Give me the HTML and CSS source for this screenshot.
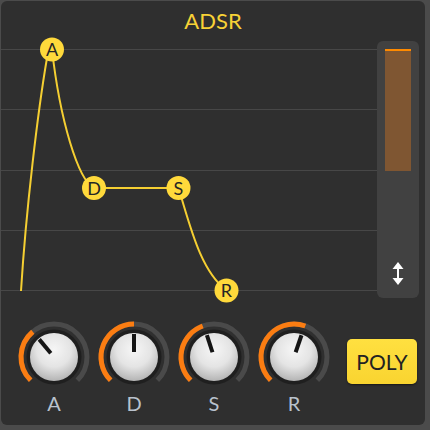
FILE: index.html
```html
<!DOCTYPE html>
<html lang="en">
    <head>
        <meta charset="UTF-8" />
        <meta name="viewport" content="width=device-width, initial-scale=1.0"/>
        <title>ADSR</title>
        <link rel="stylesheet" href="styles.css">
    </head>
    <body>
        <div class="panel">
            <div class="title">ADSR</div>

            <div class="main">
                <svg class="graph" width="376" height="260" viewBox="1 41 376 260">
                    <g class="grid">
                        <line x1="1" y1="49.5" x2="377" y2="49.5"/>
                        <line x1="1" y1="109.5" x2="377" y2="109.5"/>
                        <line x1="1" y1="170.5" x2="377" y2="170.5"/>
                        <line x1="1" y1="230.5" x2="377" y2="230.5"/>
                        <line x1="1" y1="290.5" x2="377" y2="290.5"/>
                    </g>
                    <path class="curve" d="M21,291 C26,210 38,110 47,58 L52,49.5 C60,120 78,180 94,188 L178.5,188 C190,225 200,270 226.5,290.5"/>
                    <g class="node">
                        <circle cx="52" cy="49.5" r="12"/>
                        <text x="52" y="56">A</text>
                    </g>
                    <g class="node">
                        <circle cx="94" cy="188" r="12"/>
                        <text x="94" y="194.5">D</text>
                    </g>
                    <g class="node">
                        <circle cx="178.5" cy="188" r="12"/>
                        <text x="178.5" y="194.5">S</text>
                    </g>
                    <g class="node">
                        <circle cx="226.5" cy="290.5" r="12"/>
                        <text x="226.5" y="297">R</text>
                    </g>
                </svg>

                <div class="slider">
                    <div class="slider-fill"></div>
                    <svg class="slider-icon" width="12" height="23" viewBox="0 0 12 23">
                        <polygon points="6,0 11.5,7 0.5,7"/>
                        <rect x="5" y="6" width="2" height="11"/>
                        <polygon points="0.5,16 11.5,16 6,23"/>
                    </svg>
                </div>
            </div>

            <div class="controls">
                <div class="knob">
                    <svg width="80" height="76" viewBox="0 0 80 76">
                        <defs>
                            <radialGradient id="cap" cx="50%" cy="35%" r="65%">
                                <stop offset="0" stop-color="#f6f6f6"/>
                                <stop offset="0.55" stop-color="#e4e4e4"/>
                                <stop offset="1" stop-color="#b4b4b4"/>
                            </radialGradient>
                        </defs>
                        <path class="track" d="M16.67,63.33 A33,33 0 1,1 63.33,63.33"/>
                        <path class="value" d="M16.67,63.33 A33,33 0 0,1 18.79,14.72"/>
                        <circle class="ring" cx="40" cy="40" r="27.5"/>
                        <circle class="cap" cx="40" cy="40" r="24"/>
                        <line class="pointer" x1="40" y1="35" x2="40" y2="17" transform="rotate(-40 40 40)"/>
                    </svg>
                    <span class="knob-label">A</span>
                </div>
                <div class="knob">
                    <svg width="80" height="76" viewBox="0 0 80 76">
                        <path class="track" d="M16.67,63.33 A33,33 0 1,1 63.33,63.33"/>
                        <path class="value" d="M16.67,63.33 A33,33 0 0,1 40,7"/>
                        <circle class="ring" cx="40" cy="40" r="27.5"/>
                        <circle class="cap" cx="40" cy="40" r="24"/>
                        <line class="pointer" x1="40" y1="35" x2="40" y2="17"/>
                    </svg>
                    <span class="knob-label">D</span>
                </div>
                <div class="knob">
                    <svg width="80" height="76" viewBox="0 0 80 76">
                        <path class="track" d="M16.67,63.33 A33,33 0 1,1 63.33,63.33"/>
                        <path class="value" d="M16.67,63.33 A33,33 0 0,1 28.71,8.99"/>
                        <circle class="ring" cx="40" cy="40" r="27.5"/>
                        <circle class="cap" cx="40" cy="40" r="24"/>
                        <line class="pointer" x1="40" y1="35" x2="40" y2="17" transform="rotate(-18 40 40)"/>
                    </svg>
                    <span class="knob-label">S</span>
                </div>
                <div class="knob">
                    <svg width="80" height="76" viewBox="0 0 80 76">
                        <path class="track" d="M16.67,63.33 A33,33 0 1,1 63.33,63.33"/>
                        <path class="value" d="M16.67,63.33 A33,33 0 0,1 51.29,8.99"/>
                        <circle class="ring" cx="40" cy="40" r="27.5"/>
                        <circle class="cap" cx="40" cy="40" r="24"/>
                        <line class="pointer" x1="40" y1="35" x2="40" y2="17" transform="rotate(19 40 40)"/>
                    </svg>
                    <span class="knob-label">R</span>
                </div>

                <button class="poly">POLY</button>
            </div>
        </div>
    </body>
</html>
```

FILE: styles.css
```css
* {
    margin: 0;
    padding: 0;
    box-sizing: border-box;
}

body {
    background: #4b4b4b;
    font-family: 'Lato', 'Open Sans', sans-serif;
}

.panel {
    width: 424px;
    height: 424px;
    margin: 1px 0 0 1px;
    background-color: #2f2f2f;
    border-radius: 6px;
}

.title {
    height: 40px;
    line-height: 40px;
    text-align: center;
    font-size: 22px;
    color: #f8d236;
}

.main {
    display: flex;
    height: 260px;
}

.graph {
    flex: none;
    overflow: visible;
}

.grid line {
    stroke: #474747;
    stroke-width: 1;
}

.curve {
    fill: none;
    stroke: #f5cf32;
    stroke-width: 2;
}

.node circle {
    fill: #ffd93b;
}

.node text {
    font-family: 'Lato', sans-serif;
    font-size: 18px;
    fill: #262626;
    text-anchor: middle;
}

.slider {
    width: 42px;
    height: 257px;
    background-color: #414141;
    border-radius: 6px;
    display: flex;
    flex-direction: column;
    align-items: center;
    padding-top: 8px;
    padding-bottom: 13px;
}

.slider-fill {
    width: 26px;
    height: 122px;
    background-color: #7f5632;
    border-top: 2px solid #ff8a00;
}

.slider-icon {
    margin-top: auto;
    fill: #ffffff;
}

.controls {
    display: flex;
    align-items: flex-start;
    margin-top: 16px;
    padding-left: 13px;
}

.knob {
    width: 80px;
    display: flex;
    flex-direction: column;
    align-items: center;
}

.track {
    fill: none;
    stroke: #4a4a4a;
    stroke-width: 5;
}

.value {
    fill: none;
    stroke: #fb7d12;
    stroke-width: 5;
}

.ring {
    fill: #1f1f1f;
}

.cap {
    fill: url(#cap);
}

.pointer {
    stroke: #151515;
    stroke-width: 4;
}

.knob-label {
    font-size: 20px;
    line-height: 20px;
    color: #b9c2cd;
}

.poly {
    width: 70px;
    height: 45px;
    margin-left: 13px;
    margin-top: 22px;
    border: none;
    border-radius: 5px;
    background: linear-gradient(#ffe040, #f9d430);
    box-shadow: 0 1px 2px rgba(0,0,0,0.5);
    font-family: 'Lato', sans-serif;
    font-size: 21px;
    color: #222222;
}
```
